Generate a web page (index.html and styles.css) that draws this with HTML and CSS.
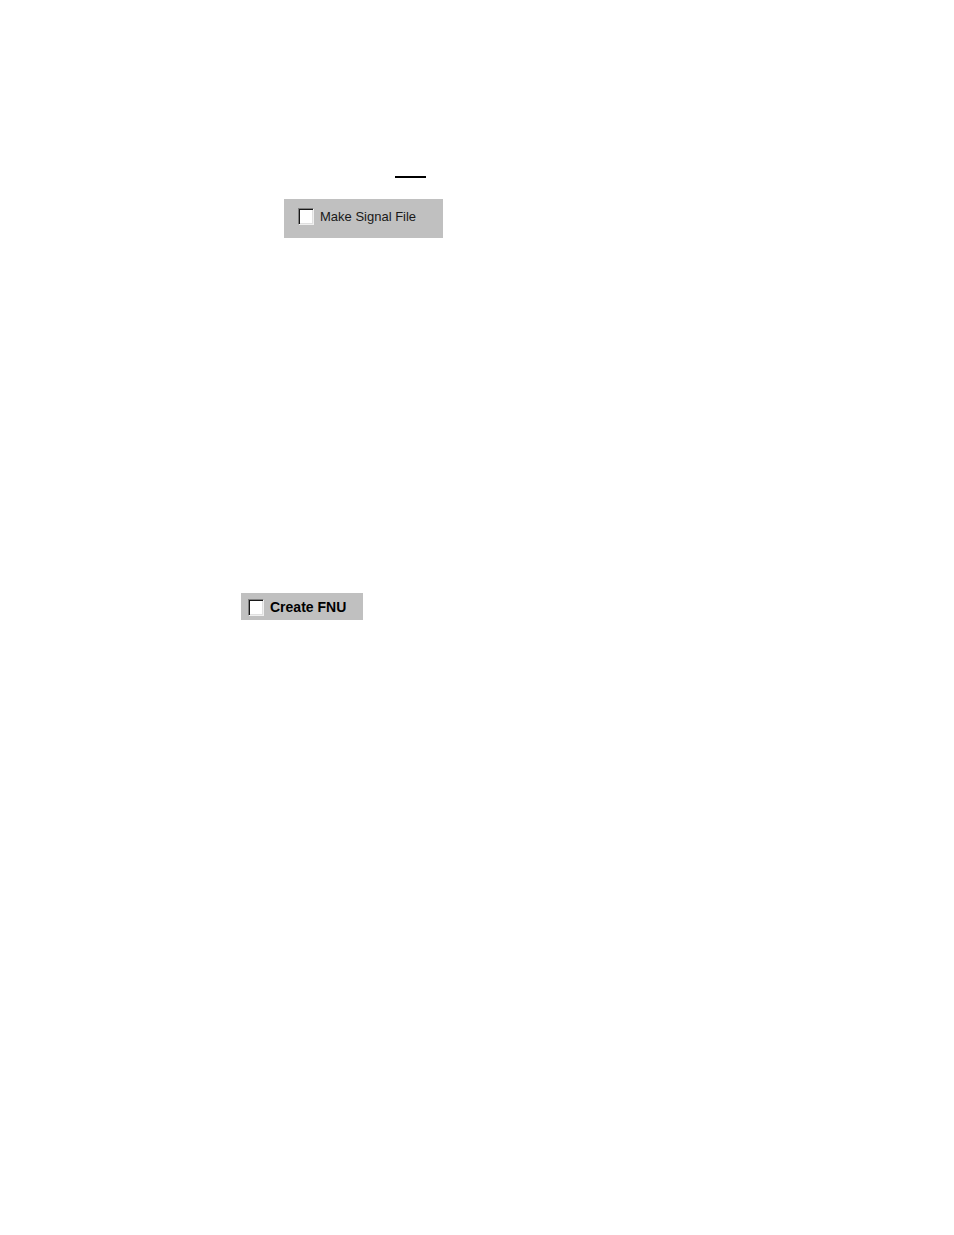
FILE: index.html
```html
<!DOCTYPE html>
<html lang="en">
<head>
<meta charset="utf-8">
<meta name="viewport" content="width=device-width, initial-scale=1">
<title>File options</title>
<link rel="stylesheet" href="styles.css">
</head>
<body>
<main class="page">
  <hr class="rule">
  <label class="option option-signal"><input class="check" type="checkbox"><span>Make Signal File</span></label>
  <label class="option option-fnu"><input class="check" type="checkbox"><span>Create FNU</span></label>
</main>
</body>
</html>
```

FILE: styles.css
```css
body {
  margin: 0;
  background: #fff;
  color: #000;
  font-family: "Liberation Sans", Arial, sans-serif;
}

.page {
  display: flex;
  flex-direction: column;
  align-items: flex-start;
  padding-top: 176px;
}

.rule {
  width: 31px;
  height: 2px;
  margin: 0 0 21px 395px;
  border: 0;
  background: #000;
}

.option {
  display: flex;
  align-items: center;
  gap: 6px;
  background: #c0c0c0;
  font-size: 13px;
  line-height: 17px;
}

.option-signal {
  margin-left: 284px;
  padding: 9px 27px 13px 14px;
  color: #181818;
}

.option-fnu {
  margin: 355px 0 0 241px;
  padding: 6px 17px 4px 7px;
  font-size: 14px;
  font-weight: bold;
}

.check {
  appearance: none;
  box-sizing: border-box;
  flex: none;
  width: 16px;
  height: 17px;
  margin: 0;
  border: 1px solid;
  border-color: #808080 #f0f0f0 #f0f0f0 #808080;
  background: #fff;
  box-shadow: inset 1px 1px #181818, inset -1px -1px #e0e0e0;
}

.check:checked {
  background: #fff linear-gradient(#000, #000) center / 7px 7px no-repeat;
}
```
